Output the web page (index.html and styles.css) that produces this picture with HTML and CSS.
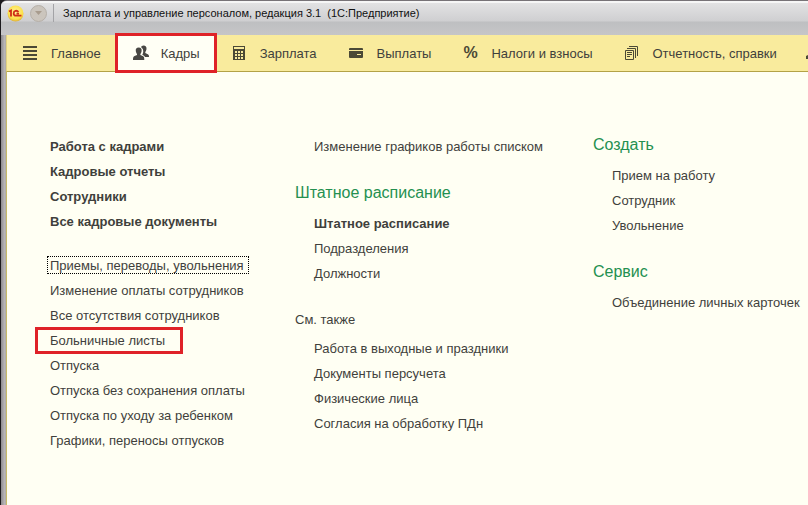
FILE: index.html
```html
<!DOCTYPE html>
<html lang="ru">
<head>
<meta charset="utf-8">
<title>Зарплата и управление персоналом, редакция 3.1 (1С:Предприятие)</title>
<link rel="stylesheet" href="styles.css">
</head>
<body>
<div class="window">
  <header class="titlebar">
    <svg class="logo" width="17" height="17" viewBox="0 0 17 17" aria-hidden="true">
      <defs>
        <radialGradient id="gold" cx="50%" cy="40%" r="60%">
          <stop offset="0" stop-color="#fff49a"/>
          <stop offset="0.75" stop-color="#fce04a"/>
          <stop offset="1" stop-color="#dcae3c"/>
        </radialGradient>
      </defs>
      <circle cx="8.500" cy="8.500" r="8" fill="url(#gold)"/>
      <path d="M2 6.500L4 5.500V11.500M11.500 7C10 5 6.700 5.400 6.700 8.200C6.700 10 7.700 10.700 9 10.700H14.500M12 8.600H9.500" fill="none" stroke="#cf2c17" stroke-width="1.800"/>
    </svg>
    <button class="menu-button" type="button" aria-label="Меню">
      <svg width="7" height="4" viewBox="0 0 7 4"><path d="M0 0H7L3.500 4Z" fill="#a89c8e"/></svg>
    </button>
    <span class="title">Зарплата и управление персоналом, редакция 3.1&nbsp; (1С:Предприятие)</span>
  </header>

  <nav class="sections">
    <a class="section" href="#">
      <svg class="icon" viewBox="0 0 16 16"><path d="M0 2H14M0 6H14M0 10H14M0 14H14" stroke="#4b4936" stroke-width="2"/></svg>
      Главное
    </a>
    <a class="section active" href="#">
      <svg class="icon" viewBox="0 0 16 16" fill="#484743">
        <path d="M10.500 0.500C12.700 0.500 13.700 2 13.500 4C13.300 5.500 12.800 6.300 12.300 7V8L14.800 9.200C15.800 9.800 16 10.500 16 12H12C11.500 10.800 10.500 10.200 9.300 9.700C10.600 8 10.800 4.500 8.800 2.800L8 2.300C8.400 1.200 9.300 0.500 10.500 0.500Z"/>
        <path d="M5.700 2.500C8 2.500 8.900 4 8.600 6C8.400 7.500 7.900 8.300 7.400 9V10L9.700 11C11 11.600 11.300 12.500 11.300 15H0C0 12.500 0.300 11.600 1.600 11L4 10V9C3.500 8.300 3 7.500 2.800 6C2.500 4 3.400 2.500 5.700 2.500Z"/>
      </svg>
      Кадры
    </a>
    <a class="section" href="#">
      <svg class="icon" viewBox="0 0 16 16">
        <path d="M1 1H13V15H1Z" fill="#4b4936"/>
        <path d="M2 2H12V4H2ZM3 6H5V8H3ZM6 6H8V8H6ZM9 6H11V8H9ZM3 9H5V11H3ZM6 9H8V11H6ZM9 9H11V11H9ZM3 12H5V14H3ZM6 12H8V14H6ZM9 12H11V14H9Z" fill="#f9eb9d"/>
      </svg>
      Зарплата
    </a>
    <a class="section" href="#">
      <svg class="icon" viewBox="0 0 16 16">
        <rect y="3" width="14" height="10" rx="1" fill="#4b4936"/>
        <path d="M0 5.500H14M8 9.500H12" stroke="#f9eb9d"/>
      </svg>
      Выплаты
    </a>
    <a class="section" href="#">
      <span class="icon percent" aria-hidden="true">%</span>
      Налоги и взносы
    </a>
    <a class="section" href="#">
      <svg class="icon" viewBox="0 0 16 16" fill="none" stroke="#4b4936">
        <path d="M0.500 5.500H8.500V14.500H0.500ZM2 3.500H10.500V13M4 1.500H12.500V11M2 7.500H7M2 9.500H7M2 11.500H5"/>
      </svg>
      Отчетность, справки
    </a>
    <a class="section trailing" href="#" aria-label="Настройка">
      <svg class="icon" viewBox="0 0 16 16"><path d="M0 11L2 10L8 3L12 1L14 3L5 14H0Z" fill="#4b4936"/></svg>
    </a>
  </nav>

  <main class="menu">
    <div class="column lowered compact">
      <ul class="links strong">
        <li><a href="#">Работа с кадрами</a></li>
        <li><a href="#">Кадровые отчеты</a></li>
        <li><a href="#">Сотрудники</a></li>
        <li><a href="#">Все кадровые документы</a></li>
      </ul>
      <ul class="links">
        <li><a class="focused" href="#">Приемы, переводы, увольнения</a></li>
        <li><a href="#">Изменение оплаты сотрудников</a></li>
        <li><a href="#">Все отсутствия сотрудников</a></li>
        <li><a class="marked" href="#">Больничные листы</a></li>
        <li><a href="#">Отпуска</a></li>
        <li><a href="#">Отпуска без сохранения оплаты</a></li>
        <li><a href="#">Отпуска по уходу за ребенком</a></li>
        <li><a href="#">Графики, переносы отпусков</a></li>
      </ul>
    </div>

    <div class="column lowered">
      <ul class="links nested">
        <li><a href="#">Изменение графиков работы списком</a></li>
      </ul>
      <section>
        <h2 class="heading">Штатное расписание</h2>
        <ul class="links nested">
          <li class="strong"><a href="#">Штатное расписание</a></li>
          <li><a href="#">Подразделения</a></li>
          <li><a href="#">Должности</a></li>
        </ul>
      </section>
      <section>
        <h2 class="heading plain">См. также</h2>
        <ul class="links nested">
          <li><a href="#">Работа в выходные и праздники</a></li>
          <li><a href="#">Документы персучета</a></li>
          <li><a href="#">Физические лица</a></li>
          <li><a href="#">Согласия на обработку ПДн</a></li>
        </ul>
      </section>
    </div>

    <div class="column">
      <section>
        <h2 class="heading">Создать</h2>
        <ul class="links nested">
          <li><a href="#">Прием на работу</a></li>
          <li><a href="#">Сотрудник</a></li>
          <li><a href="#">Увольнение</a></li>
        </ul>
      </section>
      <section>
        <h2 class="heading">Сервис</h2>
        <ul class="links nested">
          <li><a href="#">Объединение личных карточек</a></li>
        </ul>
      </section>
    </div>
  </main>
</div>
</body>
</html>
```
FILE: styles.css
```css
* {
  box-sizing: border-box;
}

body {
  margin: 0;
  background: #1c1a1d;
  color: #3f3f3c;
  font: 13px/25px "Liberation Sans", Arial, sans-serif;
}

a {
  color: inherit;
  text-decoration: none;
}

.window {
  display: flex;
  flex-direction: column;
  min-height: 100vh;
  margin-left: 1px;
  padding-left: 5px;
  overflow: hidden;
  border-top: 1px solid #777377;
  border-radius: 6px 0 0 0;
  background: linear-gradient(90deg, #8e8b8e, #bdbabd 4px, #a5a298 5px);
}

.titlebar {
  display: flex;
  align-items: center;
  height: 34px;
  margin-left: -5px;
  padding: 0 6px 12px;
  border-top: 2px solid #f6f6f6;
  background: linear-gradient(#e2e2e3, #cfcfd1 18px, #bebfc1 19px, #c6c6c8);
  color: #111;
  font-size: 11px;
  white-space: nowrap;
}

.logo {
  flex: none;
}

.menu-button {
  display: grid;
  flex: none;
  place-items: center;
  width: 17px;
  height: 17px;
  margin-left: 6px;
  padding: 0;
  border: 1px solid #b5afa8;
  border-radius: 50%;
  background: #cbc5bd;
}

.title {
  margin-left: 6px;
  padding-left: 9px;
  border-left: 1px solid #a3a3a6;
  line-height: 18px;
}

.sections {
  display: flex;
  height: 37px;
  border-bottom: 1px solid #b3a246;
  border-left: 1px solid #e0d080;
  background: #f9eb9d;
  white-space: nowrap;
}

.section {
  position: relative;
  display: flex;
  flex: none;
  align-items: center;
  gap: 12px;
  padding: 0 16px;
}

.trailing {
  padding-left: 13px;
}

.icon {
  flex: none;
  width: 16px;
  height: 16px;
}

.percent {
  color: #4b4936;
  font-size: 16px;
  font-weight: bold;
  line-height: 16px;
}

.active {
  background: #fffff5;
}

.active::after {
  content: "";
  position: absolute;
  inset: -2px -1px -2px -2px;
  border: 3px solid #df2228;
}

.menu {
  display: grid;
  flex: 1;
  grid-template-columns: minmax(0, 245fr) minmax(0, 298fr) minmax(0, 215fr);
  padding: 60px 0 40px 43px;
  border-left: 1px solid #c6b968;
  background: #fffff3;
  white-space: nowrap;
}

.column {
  display: flex;
  flex-direction: column;
  gap: 21px;
}

.compact {
  gap: 19px;
}

.lowered {
  padding-top: 2px;
}

.links {
  margin: 0;
  padding: 0;
  list-style: none;
}

.nested {
  padding-left: 19px;
}

.strong {
  font-weight: bold;
}

.heading {
  margin: 0 0 6px;
  color: #249050;
  font-size: 16px;
  font-weight: normal;
}

.plain {
  margin-bottom: 4px;
  color: inherit;
  font-size: 13px;
}

.focused,
.marked {
  position: relative;
}

.focused::after {
  content: "";
  position: absolute;
  inset: -2px -5px -1px -3px;
  border: 1px dotted #000;
}

.marked::after {
  content: "";
  position: absolute;
  inset: -6px -18px -6px -15px;
  border: 3px solid #df2228;
}
```
